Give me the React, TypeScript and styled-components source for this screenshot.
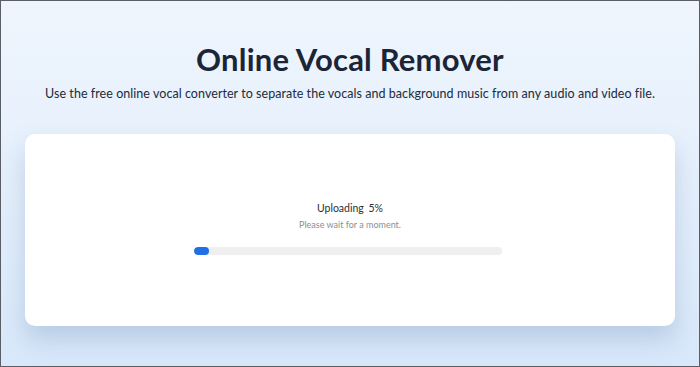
import styled, { createGlobalStyle } from 'styled-components';

const GlobalStyle = createGlobalStyle`
  html, body {
    margin: 0;
    padding: 0;
  }
  body {
    font-family: Lato, "Noto Sans", sans-serif;
  }
`;

const Page = styled.div`
  box-sizing: border-box;
  width: 700px;
  height: 367px;
  border: 1px solid #5a5f66;
  background: linear-gradient(180deg, #eef5fd 0%, #e6f0fc 45%, #d8e8fa 100%);
  display: flex;
  flex-direction: column;
  align-items: center;
  padding: 0 24px;
  overflow: hidden;
`;

const Title = styled.h1`
  margin: 39px 0 0;
  font-size: 31px;
  line-height: 38px;
  font-weight: 700;
  color: #1c2536;
  letter-spacing: 0.2px;
`;

const Subtitle = styled.p`
  margin: 7px 0 0;
  font-size: 12.5px;
  line-height: 18px;
  color: #222a38;
  white-space: nowrap;
  letter-spacing: 0.05px;
`;

const Card = styled.div`
  margin-top: 31px;
  width: 650px;
  height: 192px;
  background: #fff;
  border-radius: 10px;
  box-shadow: 0 14px 24px rgba(120, 150, 190, 0.35);
  display: flex;
  flex-direction: column;
  align-items: center;
  padding-top: 67px;
  box-sizing: border-box;
`;

const Status = styled.div`
  font-size: 10.5px;
  line-height: 14px;
  color: #2b2f36;
  word-spacing: 2px;
`;

const Hint = styled.div`
  margin-top: 4px;
  font-size: 9px;
  line-height: 12px;
  color: #8a8f96;
`;

const Track = styled.div`
  margin: 16px 4px 0 0;
  width: 308px;
  height: 8px;
  border-radius: 4px;
  background: #efefef;
  overflow: hidden;
`;

const Fill = styled.div`
  height: 100%;
  border-radius: 4px;
  background: #1f6fe6;
`;

export default function App() {
  const progress = 5;
  return (
    <>
      <GlobalStyle />
      <Page>
        <Title>Online Vocal Remover</Title>
        <Subtitle>
          Use the free online vocal converter to separate the vocals and background music from any audio and video file.
        </Subtitle>
        <Card>
          <Status>Uploading {progress}%</Status>
          <Hint>Please wait for a moment.</Hint>
          <Track>
            <Fill style={{ width: `${progress}%` }} />
          </Track>
        </Card>
      </Page>
    </>
  );
}
